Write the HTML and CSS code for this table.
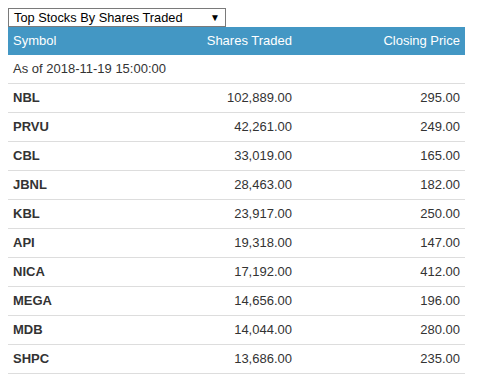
FILE: index.html
```html
<!DOCTYPE html>
<html>
<head>
<meta charset="utf-8">
<link rel="stylesheet" href="styles.css">
</head>
<body>
<div class="widget">
  <div class="picker">
    <span class="picker-label">Top Stocks By Shares Traded</span>
    <span class="picker-arrow">▼</span>
  </div>
  <table class="stocks">
    <colgroup>
      <col class="c-sym">
      <col class="c-shares">
      <col class="c-price">
    </colgroup>
    <thead>
      <tr><th class="left">Symbol</th><th>Shares Traded</th><th>Closing Price</th></tr>
    </thead>
    <tbody>
      <tr><td class="left asof" colspan="3">As of 2018-11-19 15:00:00</td></tr>
      <tr><td class="sym">NBL</td><td>102,889.00</td><td>295.00</td></tr>
      <tr><td class="sym">PRVU</td><td>42,261.00</td><td>249.00</td></tr>
      <tr><td class="sym">CBL</td><td>33,019.00</td><td>165.00</td></tr>
      <tr><td class="sym">JBNL</td><td>28,463.00</td><td>182.00</td></tr>
      <tr><td class="sym">KBL</td><td>23,917.00</td><td>250.00</td></tr>
      <tr><td class="sym">API</td><td>19,318.00</td><td>147.00</td></tr>
      <tr><td class="sym">NICA</td><td>17,192.00</td><td>412.00</td></tr>
      <tr><td class="sym">MEGA</td><td>14,656.00</td><td>196.00</td></tr>
      <tr><td class="sym">MDB</td><td>14,044.00</td><td>280.00</td></tr>
      <tr><td class="sym">SHPC</td><td>13,686.00</td><td>235.00</td></tr>
    </tbody>
  </table>
</div>
</body>
</html>
```
FILE: styles.css
```css
html, body {
  margin: 0;
  padding: 0;
  background: #ffffff;
}
body {
  padding: 8px;
  font-family: "Liberation Sans", Arial, sans-serif;
  color: #333333;
}
.widget {
  width: 457px;
}
.picker {
  box-sizing: border-box;
  width: 218px;
  height: 19px;
  border: 1px solid #7a7a7a;
  display: flex;
  align-items: center;
  justify-content: space-between;
  padding: 0 5px 0 5px;
  font-size: 12.8px;
  color: #000000;
  line-height: 17px;
}
.picker-arrow {
  font-size: 10px;
}
.stocks {
  width: 457px;
  border-collapse: collapse;
  table-layout: fixed;
  font-size: 13px;
  line-height: 20px;
}
.c-sym { width: 130px; }
.c-shares { width: 159px; }
.c-price { width: 168px; }
.stocks th {
  background: #4397c4;
  color: #ffffff;
  font-weight: normal;
  text-align: right;
  padding: 4px 5px;
  height: 20px;
}
.stocks td {
  text-align: right;
  padding: 4px 5px;
  border-bottom: 1px solid #dddddd;
  color: #333333;
}
.stocks .left {
  text-align: left;
}
.stocks td.sym {
  text-align: left;
  font-weight: bold;
}
```
